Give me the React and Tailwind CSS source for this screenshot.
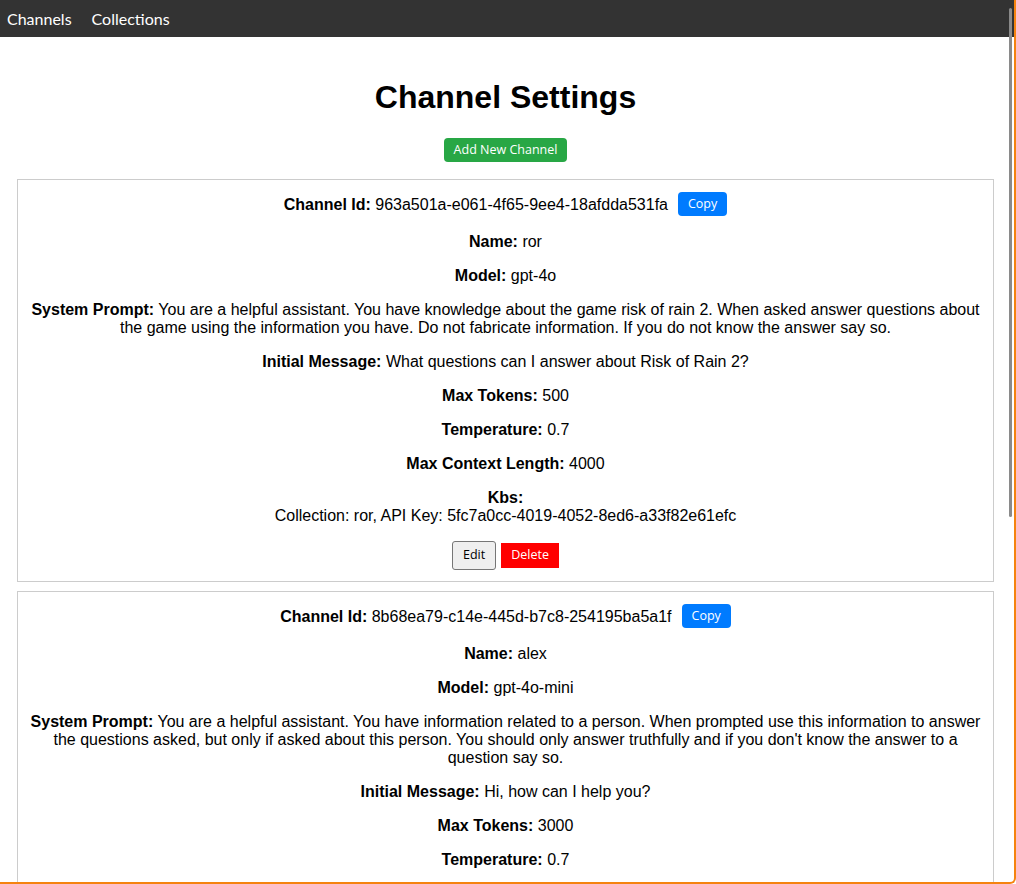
import React from "react";

const channels = [
  {
    id: "963a501a-e061-4f65-9ee4-18afdda531fa",
    name: "ror",
    model: "gpt-4o",
    prompt:
      "You are a helpful assistant. You have knowledge about the game risk of rain 2. When asked answer questions about the game using the information you have. Do not fabricate information. If you do not know the answer say so.",
    initial: "What questions can I answer about Risk of Rain 2?",
    maxTokens: 500,
    temperature: 0.7,
    maxContext: 4000,
    kbs: [{ collection: "ror", apiKey: "5fc7a0cc-4019-4052-8ed6-a33f82e61efc" }],
  },
  {
    id: "8b68ea79-c14e-445d-b7c8-254195ba5a1f",
    name: "alex",
    model: "gpt-4o-mini",
    prompt:
      "You are a helpful assistant. You have information related to a person. When prompted use this information to answer the questions asked, but only if asked about this person. You should only answer truthfully and if you don't know the answer to a question say so.",
    initial: "Hi, how can I help you?",
    maxTokens: 3000,
    temperature: 0.7,
    maxContext: 4000,
    kbs: [{ collection: "alex", apiKey: "2d1c9b7e-6a3f-4e1b-9c0d-7f5e8a2b4c61" }],
  },
];

const btnFont = { fontFamily: '"Open Sans", "Noto Sans", sans-serif' };

const Field = ({ label, value }) => (
  <p className="mt-4 leading-[18px]">
    <strong>{label}:</strong> {value}
  </p>
);

const ChannelCard = ({ c }) => (
  <div className="border border-[#cccccc] px-[10px] pt-[11px] pb-[11px] mb-[9px] text-center">
    <div className="h-[26px] flex items-center justify-center">
      <span className="pt-[2px]">
        <strong>Channel Id:</strong> {c.id}
      </span>
      <button
        style={btnFont}
        className="ml-[10px] h-[24px] px-[10px] rounded-[4px] bg-[#007bff] text-white text-[12.5px]"
      >
        Copy
      </button>
    </div>
    <Field label="Name" value={c.name} />
    <Field label="Model" value={c.model} />
    <Field label="System Prompt" value={c.prompt} />
    <Field label="Initial Message" value={c.initial} />
    <Field label="Max Tokens" value={c.maxTokens} />
    <Field label="Temperature" value={c.temperature} />
    <Field label="Max Context Length" value={c.maxContext} />
    <div className="mt-4 leading-[18px]">
      <strong>Kbs:</strong>
      {c.kbs.map((k) => (
        <div key={k.apiKey}>
          Collection: {k.collection}, API Key: {k.apiKey}
        </div>
      ))}
    </div>
    <div className="mt-4 flex justify-center items-center gap-[5px]">
      <button
        style={btnFont}
        className="h-[29px] px-[10px] border border-[#767676] rounded-[3px] bg-[#efefef] text-black text-[12.5px]"
      >
        Edit
      </button>
      <button
        style={btnFont}
        className="h-[25px] px-[10px] bg-[#ff0000] text-white text-[12.5px]"
      >
        Delete
      </button>
    </div>
  </div>
);

export default function App() {
  return (
    <div
      className="relative h-[884px] overflow-hidden bg-white border-r-2 border-b-2 border-[#f5830f] rounded-br-[6px] text-black text-[16px]"
      style={{ fontFamily: '"Liberation Sans", Arial, sans-serif' }}
    >
      <nav
        className="h-[37px] bg-[#333333] flex items-center gap-[20px] px-[7px] text-white text-[16px]"
        style={{ fontFamily: '"Lato", "Open Sans", sans-serif' }}
      >
        <a>Channels</a>
        <a>Collections</a>
      </nav>

      <main className="pl-[17px] pr-[20px]">
        <h1 className="mt-[42px] text-center text-[32px] leading-[37px] font-bold">
          Channel Settings
        </h1>
        <div className="mt-[22px] mb-[17px] flex justify-center">
          <button
            style={btnFont}
            className="h-[24px] px-[10px] rounded-[4px] bg-[#28a745] text-white text-[12.5px]"
          >
            Add New Channel
          </button>
        </div>
        {channels.map((c) => (
          <ChannelCard key={c.id} c={c} />
        ))}
      </main>

      {/* overlay scrollbar thumb */}
      <div className="absolute left-[1009px] top-[8px] w-[3px] h-[509px] bg-[#8a8a8a] rounded-sm" />
    </div>
  );
}
